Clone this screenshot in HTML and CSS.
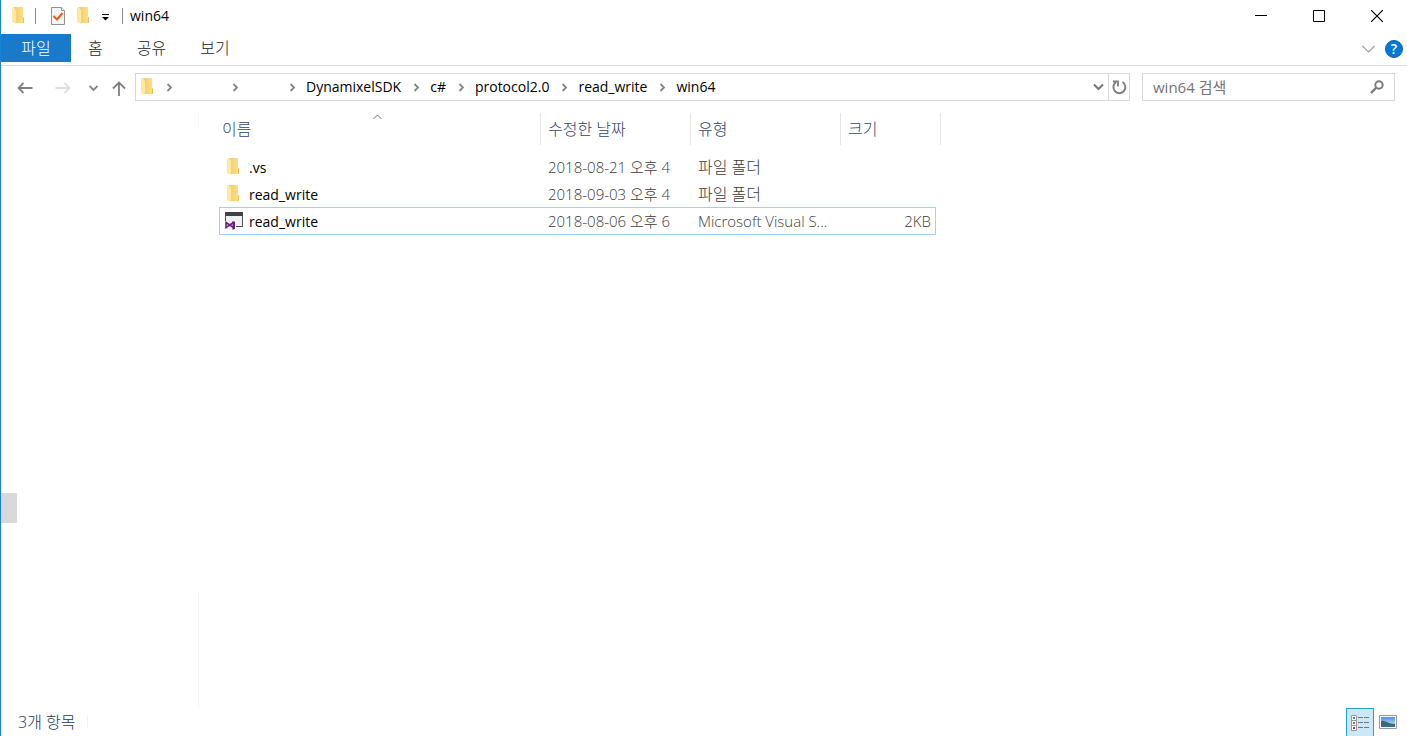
FILE: index.html
```html
<!DOCTYPE html>
<html lang="ko">
<head>
<meta charset="utf-8">
<title>win64</title>
<link rel="stylesheet" href="styles.css">
</head>
<body>
<svg class="defs" aria-hidden="true">
  <defs>
    <linearGradient id="fold" x1="0" x2="1"><stop offset="0" stop-color="#f0cb68"/><stop offset="1" stop-color="#ffe087"/></linearGradient>
    <linearGradient id="sky" x1="0" x2="0" y1="0" y2="1"><stop offset="0" stop-color="#4f8fe6"/><stop offset="1" stop-color="#d3ecfa"/></linearGradient>
    <symbol id="folder" viewBox="0 0 13 18">
      <path d="M1 0h10v10h1v6H3V2z" fill="url(#fold)"/>
      <path d="M0 0l4 3v14L0 15z" fill="#ffe9a2"/>
      <path d="M11 10.500h1v5.500h-1z" fill="#e8c15b"/>
    </symbol>
    <symbol id="crumb" viewBox="0 0 7 9"><path d="M1.500 1l3.500 3.500L1.500 8" fill="none" stroke="#858585" stroke-width="1.800"/></symbol>
  </defs>
</svg>
<div class="window">
  <header class="titlebar">
    <svg class="folder title-folder"><use href="#folder"/></svg>
    <span class="rule rule-first"></span>
    <button class="quick" aria-label="속성">
      <svg width="14" height="18" viewBox="0 0 14 18"><path d="M.5.5h10l3 3v14H.5z" fill="#f4f5f7" stroke="#929292"/><path d="M10.500.5v3h3" fill="#fff" stroke="#929292"/><path d="M2.500 9l3.500 3.500L11.500 6" fill="none" stroke="#ee5a1c" stroke-width="2"/></svg>
    </button>
    <button class="quick quick-folder" aria-label="새 폴더"><svg class="folder"><use href="#folder"/></svg></button>
    <button class="quick quick-more" aria-label="빠른 실행 도구 모음 사용자 지정"><svg width="7" height="7" viewBox="0 0 7 7"><path d="M0 0h7v1H0zM0 3h7L3.500 6.500z"/></svg></button>
    <span class="rule rule-last"></span>
    <h1 class="title">win64</h1>
    <div class="controls">
      <button aria-label="최소화"><svg width="12" height="12"><path d="M0 5h12v1H0z"/></svg></button>
      <button aria-label="최대화"><svg width="12" height="12"><path d="M.5.5h11v11H.5z" fill="none" stroke="#000"/></svg></button>
      <button aria-label="닫기"><svg width="12" height="12"><path d="M0 0l12 12M12 0L0 12" fill="none" stroke="#000" stroke-width="1.200"/></svg></button>
    </div>
  </header>

  <nav class="ribbon">
    <button class="tab tab-file">파일</button>
    <button class="tab">홈</button>
    <button class="tab">공유</button>
    <button class="tab">보기</button>
    <div class="ribbon-end">
      <button aria-label="리본 확장"><svg width="13" height="8" viewBox="0 0 13 8"><path d="M.5 1l6 6 6-6" fill="none" stroke="#a2a2a2" stroke-width="1.200"/></svg></button>
      <button class="help" aria-label="도움말">?</button>
    </div>
  </nav>

  <div class="addressbar">
    <div class="history">
      <button aria-label="뒤로"><svg width="16" height="12" viewBox="0 0 16 12"><path d="M15.500 6H1.500M6.500 1l-5 5 5 5" fill="none" stroke="#808080" stroke-width="1.800"/></svg></button>
      <button aria-label="앞으로" disabled><svg width="16" height="12" viewBox="0 0 16 12"><path d="M.5 6h14M9.500 1l5 5-5 5" fill="none" stroke="#dedede" stroke-width="1.800"/></svg></button>
      <button aria-label="최근 위치"><svg width="9" height="6" viewBox="0 0 9 6"><path d="M.5 1l4 4 4-4" fill="none" stroke="#858585" stroke-width="1.800"/></svg></button>
      <button aria-label="위로"><svg width="14" height="15" viewBox="0 0 14 15"><path d="M7 15V1.500M1 7.500l6-6 6 6" fill="none" stroke="#808080" stroke-width="1.800"/></svg></button>
    </div>
    <div class="path">
      <svg class="folder"><use href="#folder"/></svg>
      <svg class="crumb"><use href="#crumb"/></svg>
      <span class="blank blank-wide"></span>
      <svg class="crumb"><use href="#crumb"/></svg>
      <span class="blank"></span>
      <svg class="crumb"><use href="#crumb"/></svg>
      <a href="#">DynamixelSDK</a>
      <svg class="crumb"><use href="#crumb"/></svg>
      <a href="#">c#</a>
      <svg class="crumb"><use href="#crumb"/></svg>
      <a href="#">protocol2.0</a>
      <svg class="crumb"><use href="#crumb"/></svg>
      <a href="#">read_write</a>
      <svg class="crumb"><use href="#crumb"/></svg>
      <a href="#">win64</a>
      <div class="path-end">
        <button aria-label="이전 위치"><svg width="11" height="8" viewBox="0 0 11 8"><path d="M1 1.500L5.500 6 10 1.500" fill="none" stroke="#777" stroke-width="2"/></svg></button>
        <button class="refresh" aria-label="새로 고침"><svg width="15" height="15" viewBox="0 0 15 15"><path d="M10.500 2a6 6 0 1 1-6.500.2" fill="none" stroke="#808080" stroke-width="2"/><path d="M1 1.500h5v5" fill="none" stroke="#808080" stroke-width="1.800"/></svg></button>
      </div>
    </div>
    <div class="search">
      <input type="text" placeholder="win64 검색" aria-label="win64 검색">
      <button aria-label="검색"><svg width="14" height="14" viewBox="0 0 14 14"><circle cx="9" cy="5" r="3.700" fill="none" stroke="#7b7b7b" stroke-width="2"/><path d="M6.300 7.700L1 13" stroke="#7b7b7b" stroke-width="2.400"/></svg></button>
    </div>
  </div>

  <main class="content">
    <aside class="tree">
      <div class="tree-edge tree-edge-top"></div>
      <div class="thumb"></div>
      <div class="tree-edge tree-edge-bottom"></div>
    </aside>
    <section class="list">
      <table class="files">
        <colgroup><col class="col-name"><col class="col-text"><col class="col-text"><col class="col-size"></colgroup>
        <thead>
          <tr>
            <th>이름<svg class="sort" width="9" height="6" viewBox="0 0 9 6"><path d="M.5 5l4-4 4 4" fill="none" stroke="#777"/></svg></th>
            <th>수정한 날짜</th><th>유형</th><th>크기</th>
          </tr>
        </thead>
        <tbody>
          <tr><td class="name"><div class="file"><svg class="folder"><use href="#folder"/></svg>.vs</div></td><td>2018-08-21 오후 4</td><td class="kind">파일 폴더</td><td></td></tr>
          <tr><td class="name"><div class="file"><svg class="folder"><use href="#folder"/></svg>read_write</div></td><td>2018-09-03 오후 4</td><td class="kind">파일 폴더</td><td></td></tr>
          <tr class="focused"><td class="name"><div class="file"><svg class="project" viewBox="0 0 18 18"><path d="M.5.5h17v14H.5z" fill="#f1f1f3"/><path d="M0 0h18v4H0z" fill="#424242"/><path d="M.5 4v6M17.500 4v11M11 14.500h7" fill="none" stroke="#555"/><path d="M0 9h10v9H0z" fill="#f6f3f8"/><path d="M1 10.500l7.500 5M1 15.500l7.500-5M1 9.500v7" fill="none" stroke="#68217a" stroke-width="1.600"/><path d="M7.500 9l2.500.8v7L7.500 18z" fill="#68217a"/></svg>read_write</div></td><td>2018-08-06 오후 6</td><td>Microsoft Visual S...</td><td class="size">2KB</td></tr>
        </tbody>
      </table>
    </section>
  </main>

  <footer class="status">
    <span class="count">3개 항목</span>
    <div class="views">
      <button class="view view-on" aria-label="자세히"><svg width="20" height="18" viewBox="0 0 20 18"><path d="M1.500 1.500h5v5h-5zM1.500 6.500h5v5h-5zM1.500 11.500h5v5h-5z" fill="#fff" stroke="#999"/><path d="M3 3h2v2H3z" fill="#3883b5"/><path d="M3 8h2v2H3z" fill="#b45f34"/><path d="M3 13h2v2H3z" fill="#d3262c"/><path d="M8 3.500h5M14 3.500h5M8 8.500h5M14 8.500h5M8 13.500h5M14 13.500h5" stroke="#777"/></svg></button>
      <button class="view" aria-label="큰 아이콘"><svg width="18" height="14" viewBox="0 0 18 14"><path d="M.5.5h17v13H.5z" fill="#fff" stroke="#999"/><path d="M2 2h14v10H2z" fill="url(#sky)"/><path d="M2 6c4-1 7 3 14 3v3H2z" fill="#376c6b"/><path d="M2 10h14v2H2z" fill="#316ba5"/></svg></button>
    </div>
  </footer>
</div>
</body>
</html>
```
FILE: styles.css
```css
* { box-sizing: border-box; }
body {
  margin: 0;
  font: 16px/20px "Open Sans", "Noto Sans CJK KR", sans-serif;
  color: #000;
  background: #fff;
}
button {
  display: flex;
  align-items: center;
  justify-content: center;
  padding: 0;
  border: 0;
  background: none;
  font: inherit;
  color: inherit;
}
svg { display: block; flex: none; }
.defs { position: absolute; width: 0; height: 0; }
.folder { width: 13px; height: 18px; }
.window {
  display: flex;
  flex-direction: column;
  min-height: 100vh;
  border-left: 1px solid #1883d7;
}

.titlebar { display: flex; align-items: center; height: 32px; padding-left: 11px; }
.rule { width: 1px; height: 16px; background: #8c8c8c; }
.rule-first { margin: 0 15px 0 10px; }
.rule-last { margin: 0 7px 0 13px; }
.quick-folder { margin-left: 12px; }
.quick-more { margin-left: 12px; padding-top: 3px; }
.title { margin: 0; font-size: 14px; font-weight: 400; }
.controls { display: flex; margin-left: auto; padding-right: 1px; }
.controls button { width: 58px; height: 30px; }

.ribbon { display: flex; height: 34px; padding-top: 2px; border-bottom: 1px solid #dadbdc; color: #222; }
.tab { height: 28px; padding: 0 17px; font-weight: 300; }
.tab-file { width: 70px; background: #1979ca; color: #fff; }
.ribbon-end { display: flex; align-items: center; gap: 10px; height: 30px; margin-left: auto; padding-right: 4px; }
.help {
  width: 18px;
  height: 18px;
  border: 1px solid #1464a5;
  border-radius: 50%;
  background: #0078d7;
  color: #fff;
  font-size: 14px;
  font-weight: 600;
}

.addressbar { display: flex; align-items: center; height: 42px; padding-right: 12px; }
.history { display: flex; align-items: center; width: 134px; padding: 2px 0 0 16px; }
.history button { margin-right: 22px; }
.history button:nth-child(2) { margin-right: 18px; }
.history button:nth-child(3) { margin-right: 14px; }
.history button:last-child { margin-right: 0; }
.path { display: flex; flex: 1; align-items: center; height: 28px; padding-left: 5px; border: 1px solid #d9d9d9; font-size: 14px; }
.path a { color: #000; text-decoration: none; }
.crumb { width: 7px; height: 9px; margin: 0 10px 0 12px; }
.blank { width: 28px; }
.blank-wide { width: 37px; }
.path-end { display: flex; align-self: stretch; margin-left: auto; }
.path-end button { width: 20px; }
.path-end .refresh { width: 21px; border-left: 1px solid #d9d9d9; }
.search { display: flex; align-items: center; width: 253px; height: 28px; margin-left: 12px; padding: 0 10px; border: 1px solid #d9d9d9; }
.search input { flex: 1; min-width: 0; padding: 0; border: 0; outline: 0; background: none; font: inherit; font-size: 15px; }
.search input::placeholder { color: #757575; opacity: 1; }

.content { display: flex; flex: 1; }
.tree { display: flex; flex-direction: column; width: 198px; padding-top: 5px; }
.tree-edge { border-right: 1px solid #f5f5f5; }
.tree-edge-top { height: 14px; }
.tree-edge-bottom { height: 116px; }
.thumb { width: 16px; height: 30px; margin: auto 0 69px; background: #d9d9d9; }
.list { flex: 1; padding: 5px 0 0 20px; }

.files { width: 722px; table-layout: fixed; border-collapse: separate; border-spacing: 0; }
.col-name { width: 322px; }
.col-text { width: 150px; }
.col-size { width: 100px; }
.files th {
  position: relative;
  height: 32px;
  padding: 0 7px;
  border-right: 1px solid #e5e5e5;
  color: #2f4668;
  font-weight: 300;
  text-align: left;
}
.files th:first-child { padding-left: 3px; }
.sort { position: absolute; top: 1px; left: 50%; margin-left: -7px; }
.files tbody::before { content: ""; display: block; height: 9px; }
.files td { height: 27px; padding: 0 7px 2px; color: #3c3c3c; font-size: 15px; font-weight: 300; white-space: nowrap; }
.files .kind { font-size: 16px; }
.files .name { padding: 0 0 0 6px; color: #000; font-size: 14px; font-weight: 400; }
.files .size { padding-right: 10px; text-align: right; }
.file { display: flex; align-items: center; }
.file .folder { margin: 0 9px 2px 2px; }
.file .project { width: 18px; height: 18px; margin: 0 6px 2px 0; }
.focused { position: relative; }
.focused::after { content: ""; position: absolute; inset: -1px 5px 0 0; border: 1px solid #99d1ff; pointer-events: none; }

.status { display: flex; align-items: center; height: 28px; padding: 0 5px 0 17px; color: #1e395b; font-weight: 300; }
.count { padding-right: 12px; border-right: 1px solid #f3f3f3; line-height: 14px; }
.views { display: flex; margin-left: auto; }
.view { width: 28px; height: 28px; }
.view-on { border: 1px solid #26a0da; border-bottom: 0; background: #cbe8f6; }
```
